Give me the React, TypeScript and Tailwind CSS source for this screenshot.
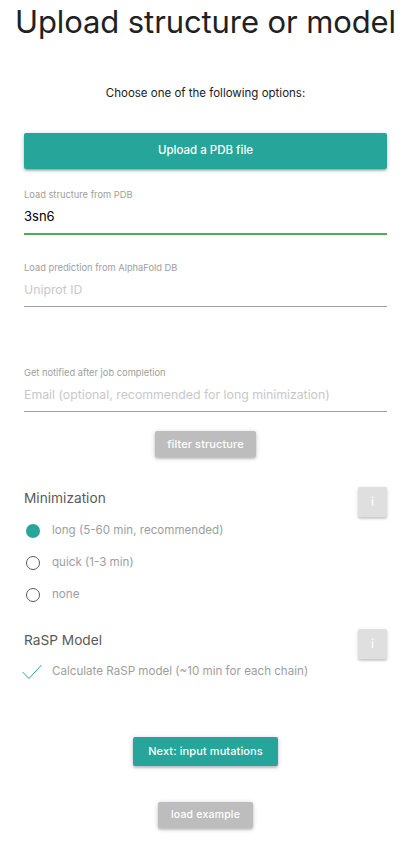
import { useState } from 'react';

const TEAL = '#26a69a';

function Field({
  label,
  value,
  placeholder,
  valid,
}: {
  label: string;
  value?: string;
  placeholder: string;
  valid?: boolean;
}) {
  return (
    <div className="flex flex-col">
      <label className="h-[13px] text-[9.3px] leading-[13px] text-[#9e9e9e]">{label}</label>
      <div
        className={`flex items-center text-[12.3px] ${
          valid ? 'h-[34px] border-b-2 border-[#4caf50]' : 'h-[33px] border-b border-[#9e9e9e]'
        }`}
      >
        {value ? (
          <span className="text-[13px] text-black">{value}</span>
        ) : (
          <span className="text-[#c8c8c8]">{placeholder}</span>
        )}
      </div>
    </div>
  );
}

function InfoButton() {
  return (
    <button className="flex h-[30px] w-[29px] items-center justify-center rounded-[2px] bg-[#dfdfdf] text-[12px] text-white shadow-[0_2px_2px_rgba(0,0,0,0.14),0_1px_4px_rgba(0,0,0,0.12)]">
      i
    </button>
  );
}

export default function App() {
  const [mode, setMode] = useState('long');
  const options = [
    { id: 'long', label: 'long (5-60 min, recommended)' },
    { id: 'quick', label: 'quick (1-3 min)' },
    { id: 'none', label: 'none' },
  ];

  return (
    <div className="min-h-[841px] bg-white pl-[24px] pr-[19px] font-['Inter',sans-serif]">
      <h1 className="-mx-[12px] pt-[2px] text-center text-[31px] leading-[40px] tracking-[-0.1px] text-[#212121]">
        Upload structure or model
      </h1>

      <p className="mt-[41px] text-center text-[11.5px] leading-[20px] text-[#212121]">
        Choose one of the following options:
      </p>

      <button
        className="mt-[30px] flex h-[36px] w-full items-center justify-center rounded-[2px] text-[11.5px] font-medium text-white shadow-[0_2px_2px_rgba(0,0,0,0.14),0_3px_1px_-2px_rgba(0,0,0,0.12),0_1px_5px_rgba(0,0,0,0.2)]"
        style={{ backgroundColor: TEAL }}
      >
        Upload a PDB file
      </button>

      <div className="mt-[19px]">
        <Field label="Load structure from PDB" value="3sn6" placeholder="" valid />
      </div>
      <div className="mt-[26px]">
        <Field label="Load prediction from AlphaFold DB" placeholder="Uniprot ID" />
      </div>
      <div className="mt-[59px]">
        <Field
          label="Get notified after job completion"
          placeholder="Email (optional, recommended for long minimization)"
        />
      </div>

      <div className="mt-[19px] flex justify-center">
        <button className="h-[26px] w-[101px] rounded-[2px] bg-[#bdbdbd] text-[11px] font-medium tracking-[0.1px] text-white shadow-[0_2px_2px_rgba(0,0,0,0.14),0_1px_5px_rgba(0,0,0,0.2)]">
          filter structure
        </button>
      </div>

      {/* Minimization */}
      <div className="mt-[30px] flex h-[28px] items-start justify-between">
        <h4 className="mt-[1px] text-[13.7px] leading-[20px] text-[#5a5a5a]">Minimization</h4>
        <InfoButton />
      </div>
      {options.map((o) => (
        <div
          key={o.id}
          onClick={() => setMode(o.id)}
          className="flex h-[32px] cursor-pointer items-center"
        >
          {mode === o.id ? (
            <span className="ml-[2px] h-[14px] w-[14px] rounded-full" style={{ backgroundColor: TEAL }} />
          ) : (
            <span className="ml-[2px] h-[14px] w-[14px] rounded-full border-[1.5px] border-[#5a5a5a]" />
          )}
          <span className="ml-[12px] text-[11.6px] text-[#9e9e9e]">{o.label}</span>
        </div>
      ))}

      {/* RaSP Model */}
      <div className="mt-[18px] flex h-[28px] items-start justify-between">
        <h4 className="mt-[1px] text-[13.7px] leading-[20px] text-[#5a5a5a]">RaSP Model</h4>
        <InfoButton />
      </div>
      <div className="flex h-[30px] items-center">
        <svg width="20" height="16" viewBox="0 0 20 16" className="-ml-[2px]">
          <polyline points="0.5,8 7,14.5 19.5,1" fill="none" stroke={TEAL} strokeWidth="1" />
        </svg>
        <span className="ml-[10px] text-[11.6px] text-[#9e9e9e]">
          Calculate RaSP model (~10 min for each chain)
        </span>
      </div>

      <div className="mt-[50px] flex justify-center">
        <button
          className="h-[29px] w-[145px] rounded-[2px] text-[11px] font-medium tracking-[0.1px] text-white shadow-[0_2px_2px_rgba(0,0,0,0.14),0_1px_5px_rgba(0,0,0,0.2)]"
          style={{ backgroundColor: TEAL }}
        >
          Next: input mutations
        </button>
      </div>

      <div className="mt-[36px] flex justify-center">
        <button className="h-[26px] w-[95px] rounded-[2px] bg-[#bdbdbd] text-[10.5px] font-medium tracking-[0.2px] text-white shadow-[0_2px_2px_rgba(0,0,0,0.14),0_1px_5px_rgba(0,0,0,0.2)]">
          load example
        </button>
      </div>
    </div>
  );
}
